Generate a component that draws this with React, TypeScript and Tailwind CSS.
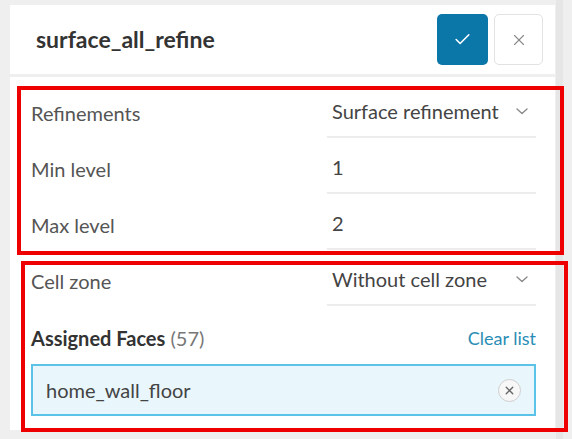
import { Check, X } from 'lucide-react'

function Chevron() {
  return (
    <svg width="12" height="7" viewBox="0 0 12 7" fill="none" className="shrink-0">
      <path d="M1 1l5 4.5L11 1" stroke="#8a8a8a" strokeWidth="1.4" strokeLinecap="round" strokeLinejoin="round" />
    </svg>
  )
}

function Row({ label, value, select }: { label: string; value: string; select?: boolean }) {
  return (
    <div className="flex h-[56px]">
      <div className="w-[296px] flex items-end pb-[13px] text-[20px] leading-[24px] text-[#555]">{label}</div>
      <div className="w-[209px] flex items-end justify-between pb-[13px] pl-[5px] pr-[8px] border-b-2 border-[#ececec] text-[20px] leading-[24px] text-[#444]">
        <span>{value}</span>
        {select && (
          <span className="mb-[8px]">
            <Chevron />
          </span>
        )}
      </div>
    </div>
  )
}

export default function App() {
  return (
    <div
      className="relative w-[572px] h-[439px] overflow-hidden bg-[#efefef]"
      style={{ fontFamily: 'Lato, "Open Sans", sans-serif' }}
    >
      {/* scrollbar track */}
      <div className="absolute left-[556px] top-0 w-[7px] h-full bg-[#e6e6e6]" />

      <div className="ml-[10px] mt-[5px] w-[545px]">
        {/* Header */}
        <div className="h-[69px] bg-white flex items-center justify-between pl-[26px] pr-[12px]">
          <div className="text-[23px] font-bold text-[#333]">surface_all_refine</div>
          <div className="flex gap-[6px]">
            <button className="w-[51px] h-[51px] rounded-[5px] bg-[#0b76a8] flex items-center justify-center">
              <Check className="w-[19px] h-[19px] text-white" strokeWidth={2} />
            </button>
            <button className="w-[49px] h-[51px] rounded-[5px] bg-white border border-[#e2e2e2] flex items-center justify-center">
              <X className="w-[18px] h-[18px] text-[#8a8a8a]" strokeWidth={1.5} />
            </button>
          </div>
        </div>

        {/* Body */}
        <div className="mt-[3px] bg-white pt-[5px] pb-[14px] pl-[21px] pr-[19px]">
          <Row label="Refinements" value="Surface refinement" select />
          <Row label="Min level" value="1" />
          <Row label="Max level" value="2" />
          <Row label="Cell zone" value="Without cell zone" select />

          <div className="mt-[8px] h-[48px] flex items-center justify-between">
            <div className="text-[20px]">
              <span className="font-bold text-[#333]">Assigned Faces</span>{' '}
              <span className="text-[#777]">(57)</span>
            </div>
            <div className="text-[18px] text-[#2a8db5]">Clear list</div>
          </div>

          <div className="mt-[2px] h-[52px] border-2 border-[#5cc3e8] bg-[#e9f6fc] flex items-center justify-between pl-[13px] pr-[13px]">
            <span className="text-[20px] text-[#444]">home_wall_floor</span>
            <span className="w-[23px] h-[23px] rounded-full border border-[#cfcfcf] bg-[#f7f7f7] flex items-center justify-center">
              <X className="w-[13px] h-[13px] text-[#666]" strokeWidth={2.5} />
            </span>
          </div>
        </div>
      </div>

      {/* annotation boxes */}
      <div className="absolute left-[17px] top-[86px] w-[547px] h-[169px] border-[4px] border-[#ee0000]" />
      <div className="absolute left-[21px] top-[261px] w-[547px] h-[171px] border-[4px] border-[#ee0000]" />
    </div>
  )
}
